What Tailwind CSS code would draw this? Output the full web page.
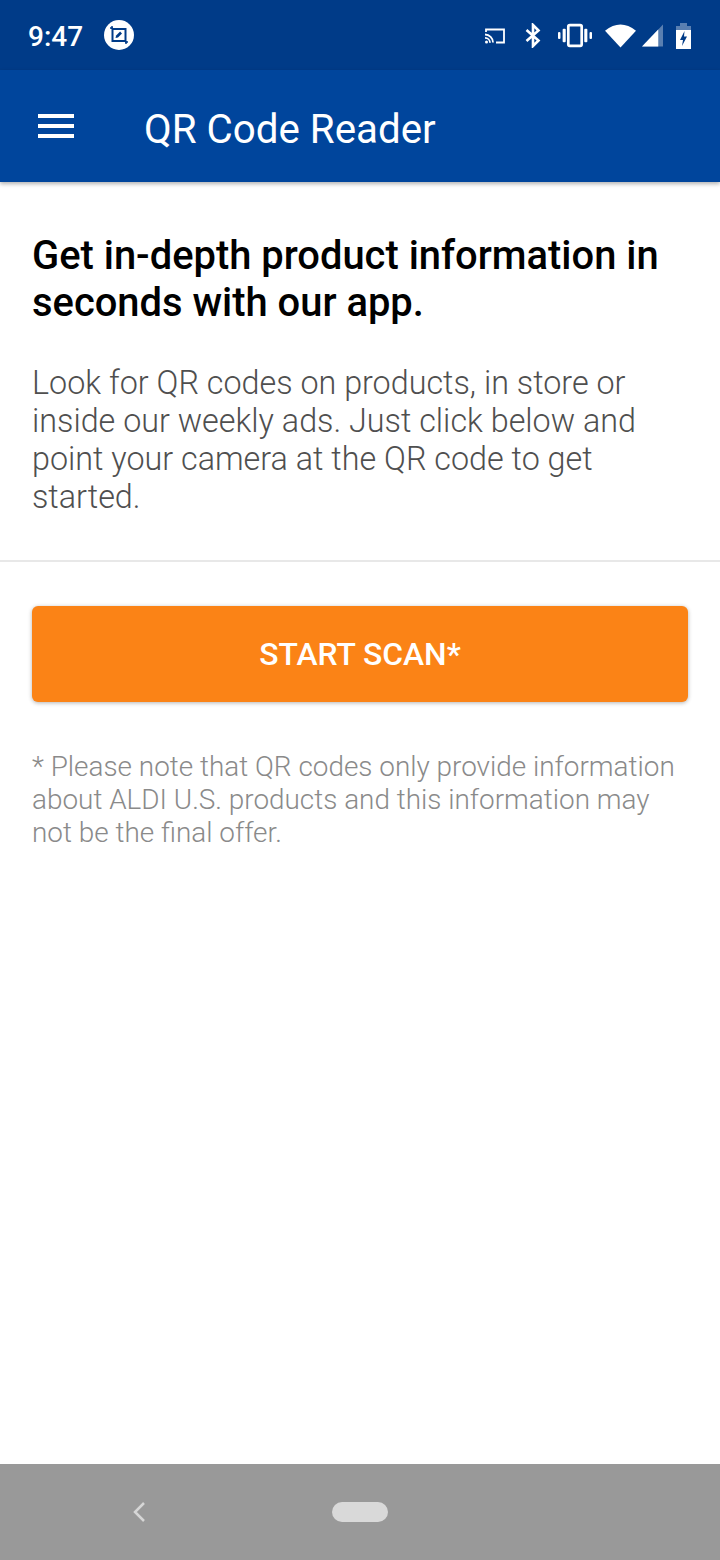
<!DOCTYPE html>
<html lang="en">
<head>
    <meta charset="UTF-8">
    <meta name="viewport" content="width=device-width, initial-scale=1.0">
    <title>QR Code Reader</title>
    <script src="https://cdn.jsdelivr.net/npm/@tailwindcss/browser@4"></script>
</head>
<body class="bg-white font-['Roboto',sans-serif]">
    <div class="flex flex-col h-[1560px] w-[720px] overflow-hidden">
        <!-- status bar -->
        <div class="h-[70px] bg-[#003b88] flex items-center justify-between pl-[28px] pr-[29px] text-white shrink-0">
            <div class="flex items-center gap-[21px]">
                <span class="text-[28px] font-medium leading-none pt-[3px]">9:47</span>
                <svg width="30" height="30" viewBox="0 0 30 30">
                    <circle cx="15" cy="15" r="15" fill="#fff"/>
                    <rect x="8.500" y="9" width="13" height="12" fill="none" stroke="#003b88" stroke-width="2"/>
                    <path d="M6 8h3M8 6v3M21 22h3M22 21v3" stroke="#003b88" stroke-width="1.500"/>
                    <path d="M11.500 18l.6-2.500 4-4 1.900 1.900-4 4z" fill="#003b88"/>
                </svg>
            </div>
            <div class="flex items-center pt-[1px]">
                <svg class="mr-[20px]" width="20" height="16" viewBox="0 0 20 16">
                    <path d="M1 4V1.500h18v13h-8" fill="none" stroke="#fff" stroke-width="1.800"/>
                    <path d="M0 6.500a8 8 0 0 1 8 8M0 9.800a5 5 0 0 1 5 5" fill="none" stroke="#fff" stroke-width="1.800"/>
                    <circle cx="1.500" cy="14" r="1.500" fill="#fff"/>
                </svg>
                <svg class="mr-[17px]" width="16" height="25" viewBox="0 0 16 25">
                    <path d="M1.500 7l12 10.500-5.500 5.500V2l5.500 5.500L1.500 18" fill="none" stroke="#fff" stroke-width="2.600"/>
                </svg>
                <svg class="mr-[13px]" width="34" height="25" viewBox="0 0 33 24">
                    <rect x="10" y="2" width="13" height="20" rx="1.500" fill="none" stroke="#fff" stroke-width="2.600"/>
                    <rect x="4.500" y="5.500" width="3" height="13" rx="1" fill="#fff"/>
                    <rect x="25.500" y="5.500" width="3" height="13" rx="1" fill="#fff"/>
                    <rect x="0" y="8.500" width="2.400" height="7" rx="1" fill="#fff"/>
                    <rect x="30.600" y="8.500" width="2.400" height="7" rx="1" fill="#fff"/>
                </svg>
                <svg class="mr-[6px]" width="31" height="25" viewBox="0 0 32 25">
                    <path d="M0 7.500Q16 -5 32 7.500L16 25z" fill="#fff"/>
                </svg>
                <svg class="mr-[13px]" width="21" height="23" viewBox="0 0 22 23">
                    <path d="M22 0L0 23h22z" fill="#fff" fill-opacity=".35"/>
                    <path d="M17 5.200L0 23h17z" fill="#fff"/>
                </svg>
                <svg width="15" height="26" viewBox="0 0 15 26">
                    <path d="M4 0h7v3H4z" fill="#fff" fill-opacity=".35"/>
                    <path d="M0 3h15v5H0z" fill="#fff" fill-opacity=".35"/>
                    <path d="M0 7h15v19H0z" fill="#fff"/>
                    <path d="M8.500 8L4 17h3l-1 6 5-9.500H8z" fill="#003b88"/>
                </svg>
            </div>
        </div>
        <!-- app bar -->
        <div class="h-[112px] bg-[#00459c] flex items-center shrink-0 shadow-[0_2px_4px_rgba(0,0,0,0.3)] relative">
            <div class="ml-[38px] w-[36px] flex flex-col gap-[6px]">
                <div class="h-[4px] bg-white"></div>
                <div class="h-[4px] bg-white"></div>
                <div class="h-[4px] bg-white"></div>
            </div>
            <div class="ml-[70px] text-white text-[40.3px] leading-none pt-[8px]">QR Code Reader</div>
        </div>
        <!-- content -->
        <div class="flex-1">
            <div class="px-[32px] pt-[50px] pb-[44px] border-b-2 border-[#e8e8e8]">
                <h1 class="text-[39.9px] leading-[47px] font-medium text-black">Get in-depth product information in seconds with our app.</h1>
                <p class="mt-[38px] text-[32.3px] leading-[38px] font-light text-[#4f4f4f]">Look for QR codes on products, in store or inside our weekly ads. Just click below and point your camera at the QR code to get started.</p>
            </div>
            <div class="px-[32px] pt-[44px]">
                <div class="h-[96px] bg-[#fb8316] rounded-[6px] shadow-[0_1px_4px_rgba(0,0,0,0.3)] flex items-center justify-center text-white text-[31.8px] font-medium pt-[2px]">START SCAN*</div>
                <p class="mt-[48px] text-[27.9px] leading-[33px] font-light text-[#8a8a8a]">* Please note that QR codes only provide information about ALDI U.S. products and this information may not be the final offer.</p>
            </div>
        </div>
        <!-- nav bar -->
        <div class="h-[96px] bg-[#999999] relative flex items-center shrink-0">
            <svg class="ml-[131px]" width="16" height="22" viewBox="0 0 16 22">
                <path d="M13 2L4 11l9 9" fill="none" stroke="#d6d6d6" stroke-width="2.500"/>
            </svg>
            <div class="ml-[185px] w-[56px] h-[20px] rounded-full bg-[#d9d9d9]"></div>
        </div>
    </div>
</body>
</html>
